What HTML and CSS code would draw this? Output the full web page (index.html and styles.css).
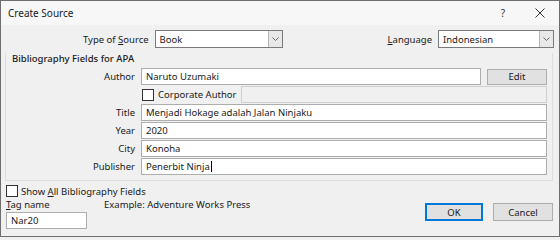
FILE: index.html
```html
<!DOCTYPE html>
<html>
<head>
<meta charset="utf-8">
<link rel="stylesheet" href="styles.css">
</head>
<body>
<div class="window">
  <div class="titlebar">
    <span class="title">Create Source</span>
    <span class="tb-btns"><span class="help">?</span><span class="close">
      <svg width="10" height="10" viewBox="0 0 10 10"><path d="M0.5 0.5 L9.5 9.5 M9.5 0.5 L0.5 9.5" stroke="#333" stroke-width="1" fill="none"/></svg>
    </span></span>
  </div>
  <div class="content">
    <div class="toprow">
      <div class="pair type">
        <span class="lbl">Type of <u>S</u>ource</span>
        <div class="select s-type"><span class="val">Book</span><span class="arrow"><svg width="7" height="4" viewBox="0 0 7 4"><path d="M0.5 0.5 L3.5 3.5 L6.5 0.5" stroke="#666" fill="none"/></svg></span></div>
      </div>
      <div class="pair lang">
        <span class="lbl"><u>L</u>anguage</span>
        <div class="select s-lang"><span class="val">Indonesian</span><span class="arrow"><svg width="7" height="4" viewBox="0 0 7 4"><path d="M0.5 0.5 L3.5 3.5 L6.5 0.5" stroke="#666" fill="none"/></svg></span></div>
      </div>
    </div>
    <div class="group">
      <div class="group-title">Bibliography Fields for APA</div>
      <div class="fields">
        <span class="flabel">Author</span>
        <div class="authorrow"><div class="input grow">Naruto Uzumaki</div><div class="btn edit">Edit</div></div>
        <span></span>
        <div class="corprow"><span class="check"></span><span class="corplbl">Corporate Author</span><div class="input disabled grow"></div></div>
        <span class="flabel">Title</span>
        <div class="input">Menjadi Hokage adalah Jalan Ninjaku</div>
        <span class="flabel">Year</span>
        <div class="input">2020</div>
        <span class="flabel">City</span>
        <div class="input">Konoha</div>
        <span class="flabel">Publisher</span>
        <div class="input">Penerbit Ninja<span class="caret"></span></div>
      </div>
    </div>
    <div class="showall"><span class="check"></span><span>Show <u>A</u>ll Bibliography Fields</span></div>
    <div class="bottom">
      <div class="tag">
        <div class="tagtop"><span class="taglbl"><u>T</u>ag name</span><span class="example">Example: Adventure Works Press</span></div>
        <div class="input taginput">Nar20</div>
      </div>
      <div class="buttons">
        <div class="btn ok">OK</div>
        <div class="btn cancel">Cancel</div>
      </div>
    </div>
  </div>
</div>
</body>
</html>
```
FILE: styles.css
```css
* { box-sizing: border-box; }
html, body { margin: 0; padding: 0; }
body {
  width: 560px; height: 237px; overflow: hidden;
  font-family: "Noto Sans", "Open Sans", sans-serif;
  font-size: 9.5px; color: #1a1a1a; background: #f0f0f0;
}
u { text-decoration: underline; text-underline-offset: 1px; }
.window {
  width: 560px; height: 237px;
  border: 1px solid #6e6e6e;
  background: #f0f0f0;
  display: flex; flex-direction: column;
}
.titlebar {
  height: 24px; display: flex; align-items: center; justify-content: space-between;
  padding-left: 7px; padding-right: 14px;
  background: #f7f7f7;
}
.title { font-size: 10px; }
.tb-btns { display: flex; align-items: center; }
.help { font-size: 10px; margin-right: 30px; color: #333; }
.close { display: flex; }
.content { padding: 5px 5px 0 4px; display: flex; flex-direction: column; }
.toprow { display: flex; justify-content: space-between; height: 18px; }
.pair { display: flex; align-items: center; }
.lbl { margin-right: 6px; }
.type { padding-left: 78px; }
.select {
  height: 18px; display: flex; align-items: stretch;
  background: #fff; border: 1px solid #7a7a7a;
}
.s-type { width: 128px; }
.s-lang { width: 116px; }
.select .val { flex: 1; padding-left: 4px; display: flex; align-items: center; }
.arrow {
  width: 14px; display: flex; align-items: center; justify-content: center;
  background: #e8e8e8; border-left: 1px solid #b5b5b5;
}
.group {
  margin-top: 5px; margin-right: 1px;
  border: 1px solid #dcdcdc; border-top: none;
  height: 128px;
}
.group-title { padding-left: 6px; height: 15px; line-height: 11px; font-weight: 500; }
.fields {
  display: grid; grid-template-columns: 129px 406px;
  column-gap: 6px; row-gap: 1px;
  grid-auto-rows: 17px;
}
.flabel { text-align: right; display: flex; align-items: center; justify-content: flex-end; }
.input {
  height: 17px; background: #fff; border: 1px solid #adadad;
  padding-left: 4px; display: flex; align-items: center; white-space: nowrap;
}
.grow { flex: 1; }
.authorrow, .corprow { display: flex; align-items: center; }
.edit { width: 60px; margin-left: 6px; height: 16px; }
.disabled { background: #f0f0f0; border-color: #cfcfcf; }
.check {
  width: 12px; height: 12px; border: 1px solid #333; background: #fff;
  display: inline-block;
}
.corprow .check { margin-left: 1px; margin-right: 4px; }
.corplbl { margin-right: 4px; }
.caret { display: inline-block; width: 1px; height: 11px; background: #000; margin-left: 1px; }
.btn {
  background: #e1e1e1; border: 1px solid #adadad;
  display: flex; align-items: center; justify-content: center;
}
.showall { margin-top: 4px; display: flex; align-items: center; height: 12px; padding-left: 1px; }
.showall .check { margin-right: 3px; }
.bottom { display: flex; justify-content: space-between; margin-top: 1px; }
.tag { display: flex; flex-direction: column; padding-left: 1px; }
.tagtop { display: flex; height: 13px; align-items: center; }
.taglbl { width: 98px; }
.taginput { width: 81px; margin-top: 1px; }
.buttons { display: flex; gap: 10px; margin-top: 5px; padding-right: 1px; }
.ok { width: 58px; height: 18px; border: 2px solid #0078d7; }
.cancel { width: 60px; height: 18px; }
```
